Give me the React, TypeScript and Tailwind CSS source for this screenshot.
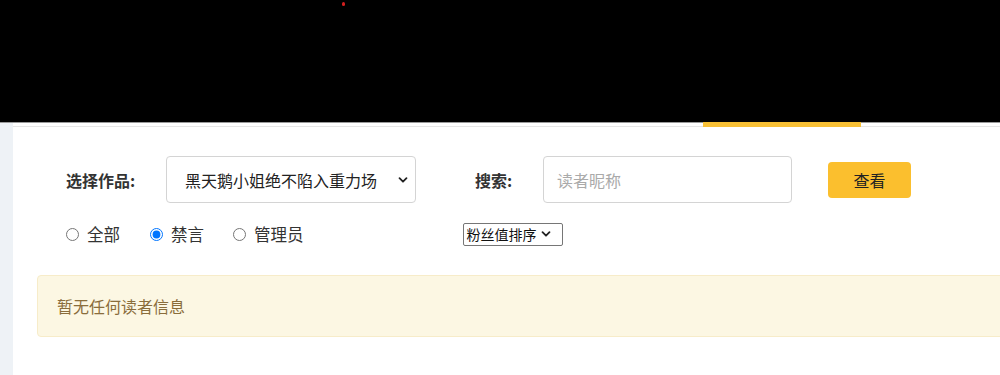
import React from "react";

const font = { fontFamily: '"Microsoft YaHei", "Noto Sans CJK SC", "Noto Sans", sans-serif' };

function Chevron({ size = 12 }: { size?: number }) {
  return (
    <svg width={size} height={size} viewBox="0 0 12 12" fill="none">
      <path d="M2.5 4.2 L6 7.7 L9.5 4.2" stroke="#222" strokeWidth="1.8" strokeLinecap="round" strokeLinejoin="round" />
    </svg>
  );
}

export default function App() {
  return (
    <div className="w-[1000px] h-[375px] overflow-hidden bg-white" style={font}>
      <div className="relative h-[122px] bg-black">
        <div className="absolute left-[342px] top-[2px] w-[3px] h-[4px] rounded-full bg-[#d21f1f]" />
      </div>
      <div className="flex h-[253px]">
        <div className="w-[13px] shrink-0 bg-[#eef2f6] border-t border-[#9a9a9a]" />
        <div className="flex-1 flex flex-col min-w-0">
          <div className="h-[5px] border-b border-[#e6e6e6] border-t border-t-[#9a9a9a] flex">
            <div className="ml-[690px] w-[158px] h-[5px] -mt-px bg-[#f8c035]" />
          </div>
          <div className="flex items-center h-[47px] mt-[29px] pl-[53px]">
            <span className="text-[16px] font-bold text-[#333] w-[100px]">选择作品:</span>
            <div className="relative w-[250px] h-[47px] border border-[#d4d4d4] rounded-[4px] flex items-center pl-[18px]">
              <span className="text-[16px] text-[#222] whitespace-nowrap overflow-hidden w-[198px]">黑天鹅小姐绝不陷入重力场</span>
              <span className="absolute right-[6px] top-[17px]"><Chevron /></span>
            </div>
            <span className="ml-[59px] text-[16px] font-bold text-[#333] w-[68px]">搜索:</span>
            <div className="w-[249px] h-[47px] border border-[#d4d4d4] rounded-[4px] flex items-center pl-[13px]">
              <span className="text-[16px] text-[#aaa]">读者昵称</span>
            </div>
            <button className="ml-[36px] w-[83px] h-[36px] rounded-[4px] bg-[#fbbf2e] text-[16px] text-[#222]">查看</button>
          </div>
          <div className="flex items-center h-[22px] mt-[20px] pl-[53px]">
            <label className="flex items-center text-[16.5px] text-[#333]">
              <input type="radio" name="r" className="w-[13px] h-[13px] m-0" />
              <span className="ml-[8px]">全部</span>
            </label>
            <label className="flex items-center text-[16.5px] text-[#333] ml-[30px]">
              <input type="radio" name="r" defaultChecked className="w-[13px] h-[13px] m-0" />
              <span className="ml-[8px]">禁言</span>
            </label>
            <label className="flex items-center text-[16.5px] text-[#333] ml-[29px]">
              <input type="radio" name="r" className="w-[13px] h-[13px] m-0" />
              <span className="ml-[8px]">管理员</span>
            </label>
            <div className="ml-[159px] w-[100px] h-[23px] border border-[#767676] rounded-[2px] flex items-center pl-[3px] gap-[3px]">
              <span className="text-[14px] text-[#111] leading-none">粉丝值排序</span>
              <Chevron size={12} />
            </div>
          </div>
          <div className="ml-[24px] mt-[30px] h-[62px] w-[1000px] bg-[#fcf7e3] border border-[#f7ecc9] rounded-[4px] flex items-center pl-[19px]">
            <span className="text-[16px] text-[#8a6d3b]">暂无任何读者信息</span>
          </div>
        </div>
      </div>
    </div>
  );
}
